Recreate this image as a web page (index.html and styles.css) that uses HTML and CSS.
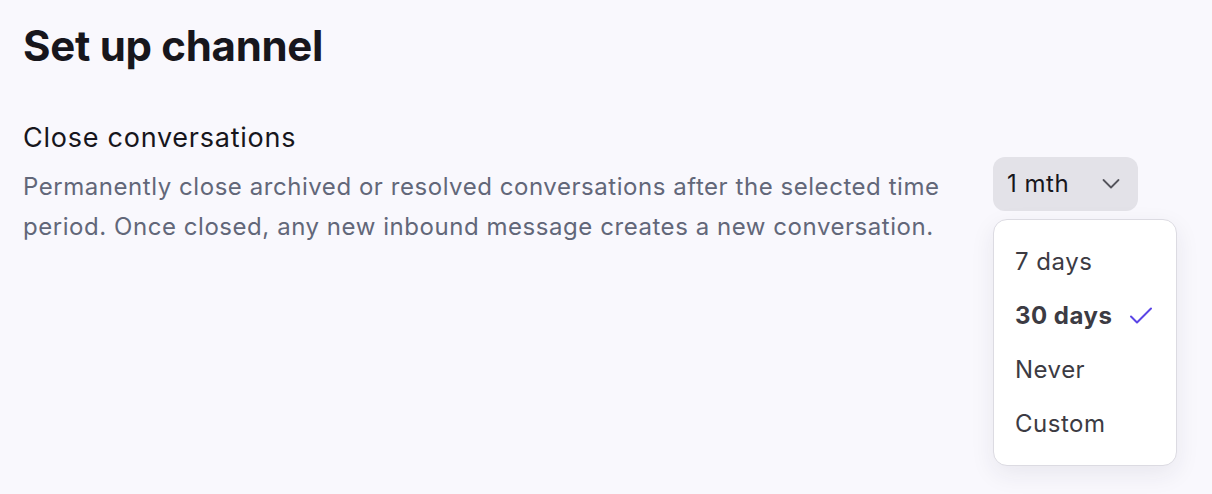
FILE: index.html
```html
<!DOCTYPE html>
<html lang="en">
<head>
<meta charset="UTF-8">
<meta name="viewport" content="width=device-width, initial-scale=1.0">
<title>Set up channel</title>
<link rel="stylesheet" href="styles.css">
</head>
<body>

<h1 class="page-title">Set up channel</h1>

<div class="setting">
    <div class="setting-text">
        <h2 class="setting-title">Close conversations</h2>
        <p class="setting-desc">Permanently close archived or resolved conversations after the selected time period. Once closed, any new inbound message creates a new conversation.</p>
    </div>
    <div class="select">
        <button class="select-btn" type="button">
            <span>1 mth</span>
            <svg class="chevron" width="18" height="18" viewBox="0 0 18 18" fill="none" stroke="currentColor" stroke-width="1.8" stroke-linecap="round" stroke-linejoin="round"><path d="M1.5 5l7.5 7.5L16.5 5"/></svg>
        </button>
        <ul class="menu">
            <li class="menu-item">7 days</li>
            <li class="menu-item selected">30 days
                <svg class="check" width="24" height="24" viewBox="0 0 24 24" fill="none" stroke="currentColor" stroke-width="2" stroke-linecap="round" stroke-linejoin="round"><path d="M2 12.5l6 6L22 4.5"/></svg>
            </li>
            <li class="menu-item">Never</li>
            <li class="menu-item">Custom</li>
        </ul>
    </div>
</div>

</body>
</html>
```

FILE: styles.css
```css
html {
    background-color: #f9f8fd;
}
body {
    font-family: Inter, "Noto Sans", sans-serif;
    margin: 0;
    padding: 18px 23px;
    min-height: 494px;
    box-sizing: border-box;
    background-color: #f9f8fd;
    color: #17161c;
}
.page-title {
    margin: 0;
    font-size: 42px;
    font-weight: 700;
    line-height: 56px;
    letter-spacing: -0.3px;
}
.setting {
    display: grid;
    grid-template-columns: 945px auto;
    column-gap: 25px;
    align-items: center;
    margin-top: 46px;
}
.setting-title {
    margin: 0;
    font-size: 27px;
    font-weight: 400;
    line-height: 36px;
    letter-spacing: 0.75px;
}
.setting-desc {
    margin: 11px 0 0;
    font-size: 24px;
    line-height: 40px;
    letter-spacing: 0.55px;
    color: #626779;
}
.select {
    position: relative;
}
.select-btn {
    display: flex;
    align-items: center;
    gap: 33px;
    height: 54px;
    padding: 0 18px 0 14px;
    border: none;
    border-radius: 12px;
    background-color: #e3e2e8;
    font-family: inherit;
    font-size: 24px;
    letter-spacing: 0.5px;
    color: #17161c;
}
.chevron {
    color: #55545c;
}
.menu {
    position: absolute;
    top: 62px;
    left: 0;
    width: 184px;
    box-sizing: border-box;
    margin: 0;
    padding: 15px 0 14px;
    list-style: none;
    background-color: #fff;
    border: 1px solid #dcdbe2;
    border-radius: 14px;
    box-shadow: 0 8px 24px rgba(40, 36, 70, 0.08);
}
.menu-item {
    display: flex;
    align-items: center;
    gap: 17px;
    padding: 0 21px;
    line-height: 54px;
    font-size: 24px;
    letter-spacing: 0.5px;
    color: #3c3b43;
}
.menu-item.selected {
    font-weight: 700;
}
.check {
    color: #5a45e6;
}
```
